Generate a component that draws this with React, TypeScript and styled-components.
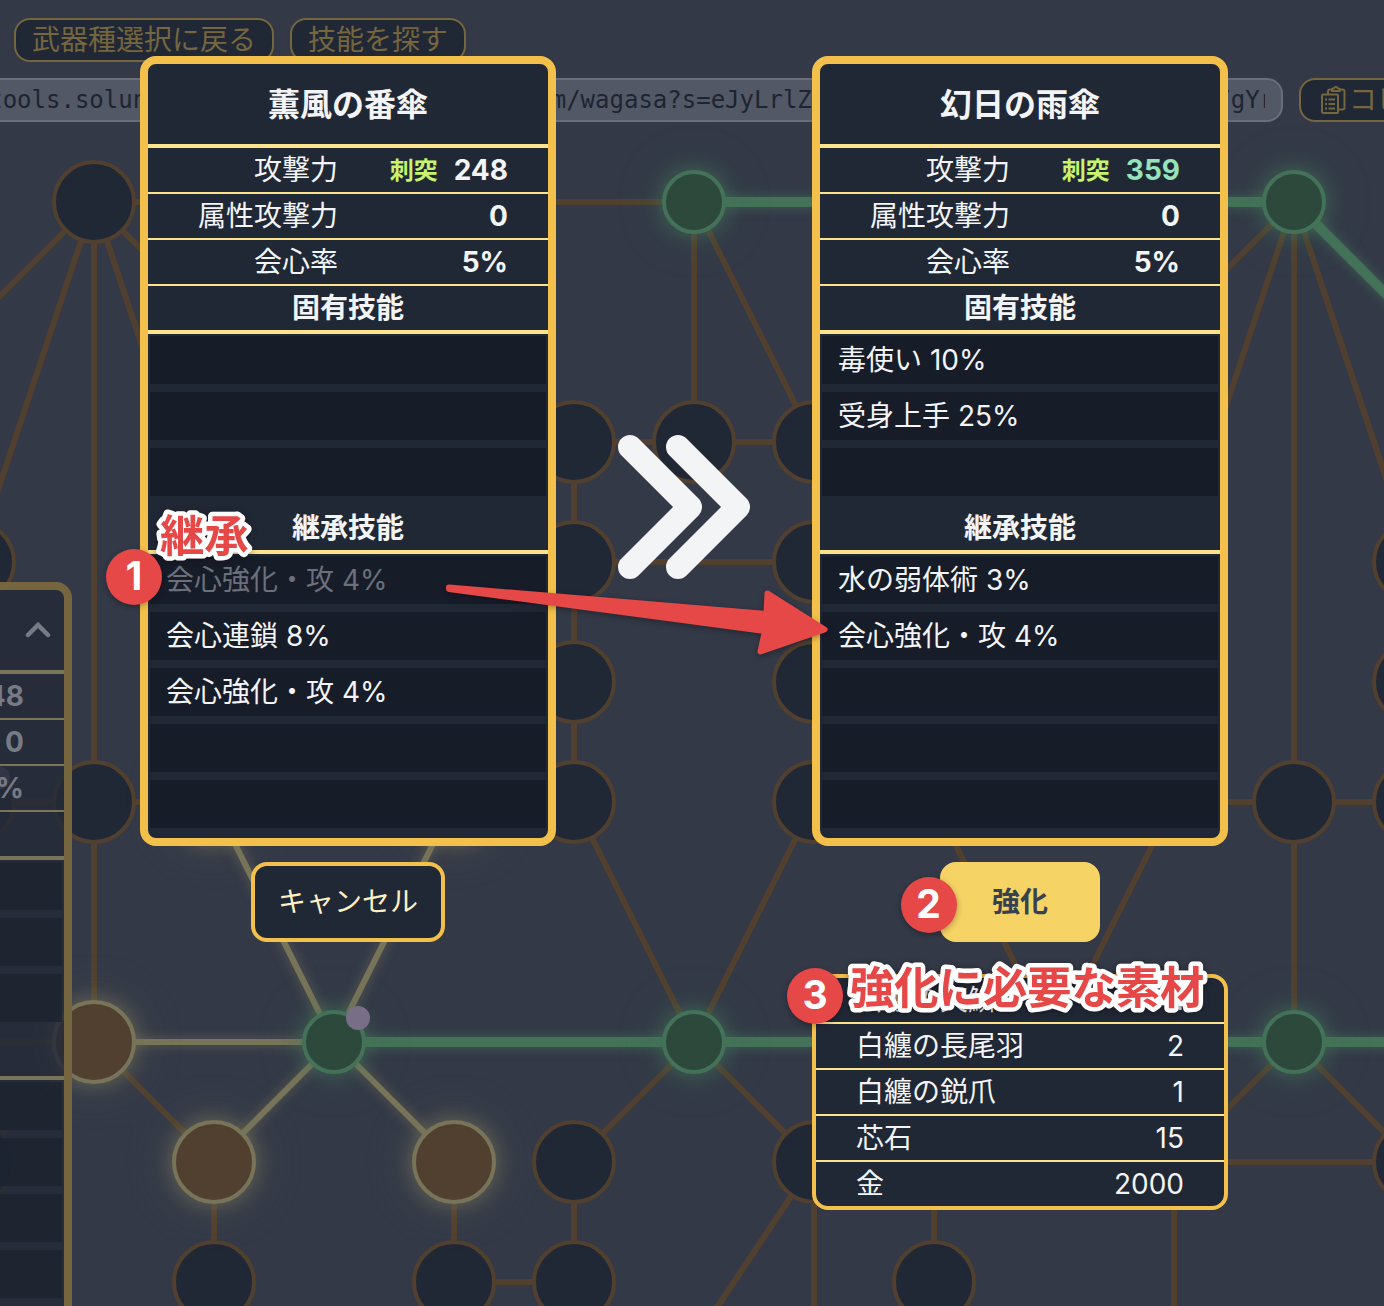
import React from "react";
import styled, { createGlobalStyle, css } from "styled-components";

const GlobalStyle = createGlobalStyle`
  *, *::before, *::after { box-sizing: border-box; }
  body {
    margin: 0;
    background: #333947;
    font-family: Inter, "Noto Sans CJK JP", sans-serif;
    overflow: hidden;
  }
`;

const Page = styled.div`
  position: relative;
  width: 1384px;
  height: 1306px;
  overflow: hidden;
  background: #333947;
  color: #f3f4f6;
  font-size: 28px;
  line-height: 44px;
  white-space: nowrap;
`;

/* ---------- skill tree ---------- */

const Tree = styled.svg`
  position: absolute;
  inset: 0;
`;

const GlowEdges = styled.g<{ $color: string; $width: number }>`
  stroke: ${(p) => p.$color};
  stroke-width: ${(p) => p.$width}px;
  filter: drop-shadow(0 0 6px ${(p) => p.$color}b0);
`;

const GlowNodes = styled.g<{ $fill: string; $stroke: string }>`
  fill: ${(p) => p.$fill};
  stroke: ${(p) => p.$stroke};
  stroke-width: 4px;
  filter: drop-shadow(0 0 9px ${(p) => p.$stroke}a0) drop-shadow(0 0 20px ${(p) => p.$stroke}60);
`;

type Edge = [number, number, number, number];
type Point = [number, number];

const lockedEdges: Edge[] = [
  [94, 202, 694, 202], [94, 202, -26, 322], [94, 202, -26, 562], [94, 202, 94, 802],
  [94, 202, 214, 562], [94, 202, 214, 322], [94, 802, 94, 1042], [-26, 802, 214, 802],
  [94, 1042, 214, 1162], [94, 1042, -26, 1162], [-26, 1042, 94, 1042],
  [694, 202, 694, 442], [694, 202, 814, 442], [574, 442, 814, 442], [574, 442, 574, 802],
  [574, 562, 814, 562], [814, 442, 814, 802], [574, 802, 694, 1042], [814, 802, 694, 1042],
  [694, 1042, 574, 1162], [694, 1042, 814, 1162], [574, 1162, 574, 1282],
  [454, 1162, 454, 1282], [214, 1162, 214, 1282], [454, 1282, 574, 1282],
  [814, 1162, 654, 1402], [814, 1162, 814, 1402], [934, 1162, 934, 1282],
  [1174, 1162, 1174, 1402], [1174, 1162, 1414, 1162], [1294, 1042, 1174, 1162],
  [1294, 1042, 1414, 1162], [1294, 802, 1294, 1042], [1174, 802, 1414, 802],
  [1294, 202, 1294, 802], [1294, 202, 1174, 322], [1294, 202, 1174, 562],
  [1294, 202, 1414, 562], [934, 802, 1054, 1042], [1174, 802, 1054, 1042],
];

const ownedEdges: Edge[] = [
  [694, 202, 1294, 202], [1294, 202, 1414, 322], [334, 1042, 1414, 1042],
];

const openEdges: Edge[] = [
  [334, 1042, 214, 802], [334, 1042, 454, 802], [334, 1042, 94, 1042],
  [334, 1042, 214, 1162], [334, 1042, 454, 1162],
];

const lockedNodes: Point[] = [
  [94, 202], [574, 442], [694, 442], [814, 442], [574, 562], [814, 562], [574, 682],
  [814, 682], [94, 802], [574, 802], [814, 802], [1294, 802], [-26, 562], [-26, 802],
  [-26, 1162], [574, 1162], [814, 1162], [214, 1282], [454, 1282], [574, 1282],
  [934, 1282], [1414, 562], [1414, 682], [1414, 802], [1414, 1162],
];

const openNodes: Point[] = [[94, 1042], [214, 1162], [454, 1162], [214, 802], [454, 802]];
const ownedNodes: Point[] = [[694, 202], [1294, 202], [334, 1042], [694, 1042], [1294, 1042]];
const markers: Point[] = [[358, 1018], [-2, 778]];

const Lines = ({ edges }: { edges: Edge[] }) => (
  <>
    {edges.map(([x1, y1, x2, y2], i) => (
      <path key={i} d={`M${x1} ${y1}L${x2} ${y2}`} />
    ))}
  </>
);

const Circles = ({ nodes, r }: { nodes: Point[]; r: number }) => (
  <>
    {nodes.map(([cx, cy], i) => (
      <circle key={i} cx={cx} cy={cy} r={r} />
    ))}
  </>
);

const SkillTree = () => (
  <Tree width="1384" height="1306" viewBox="0 0 1384 1306" fill="none">
    <g stroke="#51402f" strokeWidth="6">
      <Lines edges={lockedEdges} />
    </g>
    <GlowEdges $color="#787459" $width={6}>
      <Lines edges={openEdges} />
    </GlowEdges>
    <GlowEdges $color="#437258" $width={10}>
      <Lines edges={ownedEdges} />
    </GlowEdges>
    <g fill="#212835" stroke="#51402f" strokeWidth="4">
      <Circles nodes={lockedNodes} r={40} />
    </g>
    <GlowNodes $fill="#51402f" $stroke="#787459">
      <Circles nodes={openNodes} r={40} />
    </GlowNodes>
    <GlowNodes $fill="#2c493b" $stroke="#437258">
      <Circles nodes={ownedNodes} r={30} />
    </GlowNodes>
    <g fill="#786e87">
      <Circles nodes={markers} r={12} />
    </g>
  </Tree>
);

/* ---------- top bar ---------- */

const TopBar = styled.header`
  position: relative;
  display: flex;
  flex-direction: column;
  gap: 16px;
  padding: 18px 0 0 14px;
`;

const BarRow = styled.div`
  display: flex;
  gap: 16px;
`;

const PillButton = styled.button`
  display: flex;
  align-items: center;
  flex: none;
  gap: 4px;
  height: 44px;
  padding: 0 16px;
  border: 2px solid #75663f;
  border-radius: 16px;
  background: #212835;
  color: #75663f;
  font: inherit;
  line-height: 40px;
`;

const UrlRow = styled(BarRow)`
  margin-left: -80px;
`;

const UrlBox = styled.div`
  flex: none;
  width: 1349px;
  height: 44px;
  padding: 0 16px;
  border: 2px solid #6a6e79;
  border-radius: 16px;
  background: #525866;
`;

const UrlText = styled.div`
  overflow: hidden;
  color: #1e2431;
  font-family: "DejaVu Sans Mono", monospace;
  font-size: 24px;
  line-height: 40px;
  text-indent: -50.5px;
`;

const CopyGlyph = styled.svg`
  margin: 0 -2px 0 3px;
`;

const CopyIcon = () => (
  <CopyGlyph width="27" height="30" viewBox="0 0 27 30" fill="none" stroke="currentColor" strokeWidth="2">
    <rect x="2" y="9.5" width="16" height="18.5" rx="1" />
    <path d="M8 9V6.500a2 2 0 0 1 2-2h1.500M20 4.500h2.500a2 2 0 0 1 2 2V22.500a2 2 0 0 1-2 2h-4" />
    <path d="M12 6V4.500a1 1 0 0 1 1-1h.8a2.200 2.200 0 0 1 4.200 0h.8a1 1 0 0 1 1 1V6z" />
    <path d="M5 14.500h2M5 19h2M5 23.500h2M8.500 14.500h6.500M8.500 19h6.500M8.500 23.500h6.500" />
  </CopyGlyph>
);

/* ---------- weapon card ---------- */

const Card = styled.section<{ $dim?: boolean }>`
  --line: #fbe28d;
  --slot: #171c29;
  width: 416px;
  border: 8px solid #f3c04b;
  border-radius: 16px;
  background: #212835;
  ${(p) =>
    p.$dim &&
    css`
      --line: #7a7558;
      --slot: #1c2330d0;
      color: #777b85;
      border-color: #75663f;
      background: #232a37d0;
    `}
`;

const CardTitle = styled.h2`
  position: relative;
  display: flex;
  align-items: center;
  justify-content: center;
  height: 84px;
  margin: 0;
  padding-top: 1px;
  border-bottom: 4px solid var(--line);
  font-size: 32px;
  font-weight: 700;
`;

const Collapse = styled.svg`
  position: absolute;
  right: 13px;
  top: 31px;
`;

const StatRow = styled.div`
  display: flex;
  align-items: center;
  height: 46px;
  padding-right: 40px;
  border-bottom: 2px solid var(--line);
`;

const StatLabel = styled.span`
  width: 190px;
  text-align: right;
`;

const StatValue = styled.span<{ $up?: boolean }>`
  display: flex;
  flex: 1;
  align-items: center;
  justify-content: flex-end;
  gap: 16px;
  color: ${(p) => (p.$up ? "#97e2ba" : "inherit")};
  font-weight: 750;
`;

const DamageType = styled.span`
  padding-top: 1px;
  color: #c8f36c;
  font-size: 24px;
  font-weight: 700;
`;

const SectionTitle = styled.h3`
  height: 48px;
  margin: 0;
  border-bottom: 4px solid var(--line);
  font-size: 28px;
  font-weight: 700;
  text-align: center;
`;

const Slots = styled.ul`
  display: flex;
  flex-direction: column;
  gap: 8px;
  margin: 0;
  padding: 2px 2px 10px;
  list-style: none;
`;

const Slot = styled.li<{ $faded?: boolean }>`
  height: 48px;
  padding-left: 16px;
  background: var(--slot);
  line-height: 48px;
  color: ${(p) => (p.$faded ? "#6b707b" : "inherit")};
`;

interface Weapon {
  name: string;
  attack: number;
  up?: boolean;
  own: string[];
  inherited: string[];
  fadedIndex?: number;
}

const before: Weapon = {
  name: "薫風の番傘",
  attack: 248,
  own: ["", "", ""],
  inherited: ["会心強化・攻 4%", "会心連鎖 8%", "会心強化・攻 4%", "", ""],
  fadedIndex: 0,
};

const after: Weapon = {
  name: "幻日の雨傘",
  attack: 359,
  up: true,
  own: ["毒使い 10%", "受身上手 25%", ""],
  inherited: ["水の弱体術 3%", "会心強化・攻 4%", "", "", ""],
};

const WeaponCard = ({ weapon, dim }: { weapon: Weapon; dim?: boolean }) => (
  <Card $dim={dim}>
    <CardTitle>
      {!dim && weapon.name}
      {dim && (
        <Collapse width="26" height="18" viewBox="0 0 26 18" fill="none" stroke="#777b85" strokeWidth="4.500" strokeLinecap="round">
          <path d="M3 14L13 4L23 14" />
        </Collapse>
      )}
    </CardTitle>
    <StatRow>
      <StatLabel>攻撃力</StatLabel>
      <StatValue $up={weapon.up}>
        <DamageType>刺突</DamageType>
        {weapon.attack}
      </StatValue>
    </StatRow>
    <StatRow>
      <StatLabel>属性攻撃力</StatLabel>
      <StatValue>0</StatValue>
    </StatRow>
    <StatRow>
      <StatLabel>会心率</StatLabel>
      <StatValue>5%</StatValue>
    </StatRow>
    <SectionTitle>固有技能</SectionTitle>
    <Slots>
      {weapon.own.map((s, i) => (
        <Slot key={i}>{s}</Slot>
      ))}
    </Slots>
    <SectionTitle>継承技能</SectionTitle>
    <Slots>
      {weapon.inherited.map((s, i) => (
        <Slot key={i} $faded={weapon.fadedIndex === i}>{s}</Slot>
      ))}
    </Slots>
  </Card>
);

const SidePanel = styled.aside`
  position: absolute;
  left: -344px;
  top: 582px;
`;

/* ---------- upgrade dialog ---------- */

const Dialog = styled.main`
  position: absolute;
  inset: 0;
  display: flex;
  align-items: flex-start;
  gap: 60px;
  padding: 56px 0 0 140px;
`;

const Column = styled.div`
  display: flex;
  flex-direction: column;
  align-items: center;
  gap: 16px;
`;

const Chevrons = styled.svg`
  flex: none;
  margin-top: 377px;
`;

const ActionButton = styled.button<{ $primary?: boolean }>`
  width: ${(p) => (p.$primary ? 160 : 194)}px;
  height: 80px;
  padding: 0;
  border: 4px solid ${(p) => (p.$primary ? "#f6d365" : "#f3c04b")};
  border-radius: 16px;
  background: ${(p) => (p.$primary ? "#f6d365" : "#212835")};
  color: ${(p) => (p.$primary ? "#374151" : "#fdf0c4")};
  font: inherit;
  font-weight: ${(p) => (p.$primary ? 700 : 400)};
`;

const Materials = styled.div`
  width: 416px;
  margin-top: 16px;
  border: 4px solid #f3c04b;
  border-radius: 16px;
  background: #212835;
`;

const MaterialRow = styled.div`
  display: flex;
  justify-content: space-between;
  padding: 0 40px;
  & + & {
    border-top: 2px solid #fbe28d;
  }
`;

const materials: [string, number][] = [
  ["白纏の天鱗", 1],
  ["白纏の長尾羽", 2],
  ["白纏の鋭爪", 1],
  ["芯石", 15],
  ["金", 2000],
];

/* ---------- annotations ---------- */

const Badge = styled.div<{ $x: number; $y: number }>`
  position: absolute;
  left: ${(p) => p.$x - 28}px;
  top: ${(p) => p.$y - 28}px;
  width: 56px;
  height: 56px;
  border-radius: 50%;
  background: #e64848;
  box-shadow: 0 2px 6px #0000004d;
  color: #fff;
  font-size: 39px;
  font-weight: 720;
  line-height: 54px;
  text-align: center;
`;

const Annotations = styled.svg`
  position: absolute;
  inset: 0;
`;

const Pointer = styled.path`
  fill: #e64848;
  stroke: #e64848;
  stroke-width: 6px;
  stroke-linejoin: round;
  filter: drop-shadow(0 2px 3px #0000004d);
`;

const Callout = styled.text`
  fill: #e64848;
  stroke: #fff;
  stroke-width: 9px;
  stroke-linejoin: round;
  paint-order: stroke fill;
  font-size: 44.3px;
  font-weight: 700;
  filter: drop-shadow(0 1px 3px #00000059);
`;

export default function App() {
  return (
    <Page>
      <GlobalStyle />
      <SkillTree />
      <TopBar>
        <BarRow>
          <PillButton>武器種選択に戻る</PillButton>
          <PillButton>技能を探す</PillButton>
        </BarRow>
        <UrlRow>
          <UrlBox>
            <UrlText>
              tps://tools.solunar.github.weapontree.site.com/wagasa?s=eJyLrlZVUpUslJQSssvyk3MUbJSUKoFAEx9/gYrNAA
            </UrlText>
          </UrlBox>
          <PillButton>
            <CopyIcon />
            コピー
          </PillButton>
        </UrlRow>
      </TopBar>
      <SidePanel>
        <WeaponCard weapon={before} dim />
      </SidePanel>
      <Dialog>
        <Column>
          <WeaponCard weapon={before} />
          <ActionButton>キャンセル</ActionButton>
        </Column>
        <Chevrons width="136" height="148" viewBox="0 0 136 148" fill="none" stroke="#f3f4f6" strokeWidth="24" strokeLinecap="round" strokeLinejoin="round">
          <path d="M14 14L74 74L14 134M62 14L122 74L62 134" />
        </Chevrons>
        <Column>
          <WeaponCard weapon={after} />
          <ActionButton $primary>強化</ActionButton>
          <Materials>
            {materials.map(([name, count]) => (
              <MaterialRow key={name}>
                <span>{name}</span>
                <span>{count}</span>
              </MaterialRow>
            ))}
          </Materials>
        </Column>
      </Dialog>
      <Annotations width="1384" height="1306" viewBox="0 0 1384 1306">
        <Pointer d="M449 587.500L766.500 614L767.500 593.500L824.500 629.500L760.500 651.500L765 631L449 589Z" />
        <Callout x="160" y="551.500">継承</Callout>
        <Callout x="850" y="1004">強化に必要な素材</Callout>
      </Annotations>
      <Badge $x={134} $y={577}>1</Badge>
      <Badge $x={928.5} $y={905}>2</Badge>
      <Badge $x={815} $y={996}>3</Badge>
    </Page>
  );
}
